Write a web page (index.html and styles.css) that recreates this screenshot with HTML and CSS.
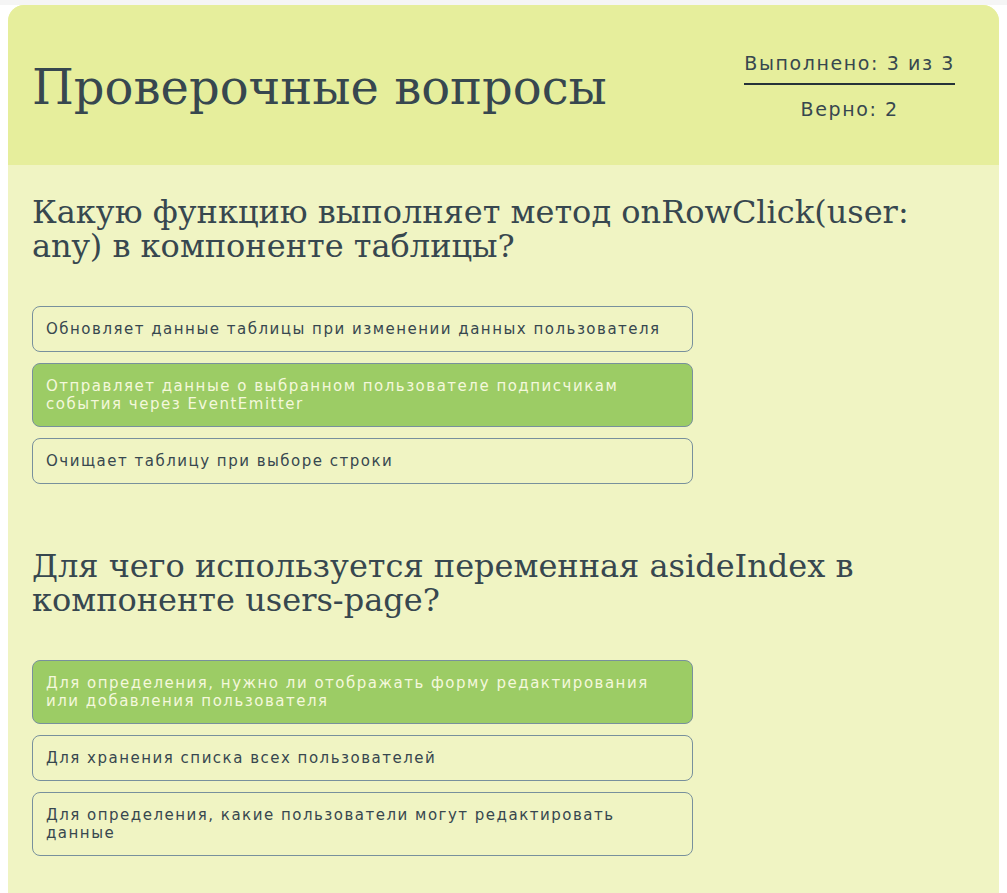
FILE: index.html
```html
<!DOCTYPE html>
<html lang="ru">
<head>
<meta charset="utf-8">
<title>Проверочные вопросы</title>
<link rel="stylesheet" href="styles.css">
</head>
<body>
<div class="topbar"></div>
<div class="card">
  <header class="card-header">
    <h1 class="title">Проверочные вопросы</h1>
    <div class="stats">
      <div class="stats-done">Выполнено: 3 из 3</div>
      <div class="stats-right">Верно: 2</div>
    </div>
  </header>
  <main class="card-body">
    <section class="question">
      <h2 class="question-title">Какую функцию выполняет метод onRowClick(user: any) в компоненте таблицы?</h2>
      <div class="options">
        <div class="option">Обновляет данные таблицы при изменении данных пользователя</div>
        <div class="option option-selected">Отправляет данные о выбранном пользователе подписчикам события через EventEmitter</div>
        <div class="option">Очищает таблицу при выборе строки</div>
      </div>
    </section>
    <section class="question">
      <h2 class="question-title">Для чего используется переменная asideIndex в компоненте users-page?</h2>
      <div class="options">
        <div class="option option-selected">Для определения, нужно ли отображать форму редактирования или добавления пользователя</div>
        <div class="option">Для хранения списка всех пользователей</div>
        <div class="option">Для определения, какие пользователи могут редактировать данные</div>
      </div>
    </section>
  </main>
</div>
</body>
</html>
```
FILE: styles.css
```css
html, body {
  margin: 0;
  padding: 0;
  background: #ffffff;
}
.topbar {
  height: 5px;
  background: #f5f5f5;
}
.card {
  margin: 0 8px;
  border-radius: 16px 16px 0 0;
  overflow: hidden;
  background: #f0f4c3;
  color: #37474f;
}
.card-header {
  height: 160px;
  background: #e6ee9c;
  display: flex;
  align-items: center;
  justify-content: space-between;
  padding: 0 44px 0 24px;
  box-sizing: border-box;
}
.title {
  margin: 3px 0 0;
  font-family: "DejaVu Serif", serif;
  font-weight: 400;
  font-size: 48px;
  line-height: 56px;
  color: #37474f;
}
.stats {
  display: flex;
  flex-direction: column;
  align-items: center;
  font-family: "DejaVu Sans", sans-serif;
  font-weight: 400;
  font-size: 19px;
  line-height: 24px;
  letter-spacing: 1.6px;
  color: #37474f;
  margin-top: 2px;
}
.stats-done {
  border-bottom: 2px solid #263238;
  padding: 0 0 8px;
}
.stats-right {
  padding-top: 12px;
}
.card-body {
  padding: 30px 24px 80px;
}
.question + .question {
  margin-top: 65px;
}
.question-title {
  margin: 0 0 43px;
  font-family: "DejaVu Serif", serif;
  font-weight: 400;
  font-size: 32px;
  line-height: 34px;
  color: #37474f;
}
.options {
  width: 661px;
  display: flex;
  flex-direction: column;
  gap: 11px;
}
.option {
  border: 1px solid #78909c;
  border-radius: 8px;
  padding: 13px 13px;
  font-family: "DejaVu Sans", sans-serif;
  font-size: 15px;
  line-height: 18px;
  letter-spacing: 1.5px;
  color: #37474f;
}
.option-selected {
  background: #9ccc65;
  color: #f4f8dc;
}
```
